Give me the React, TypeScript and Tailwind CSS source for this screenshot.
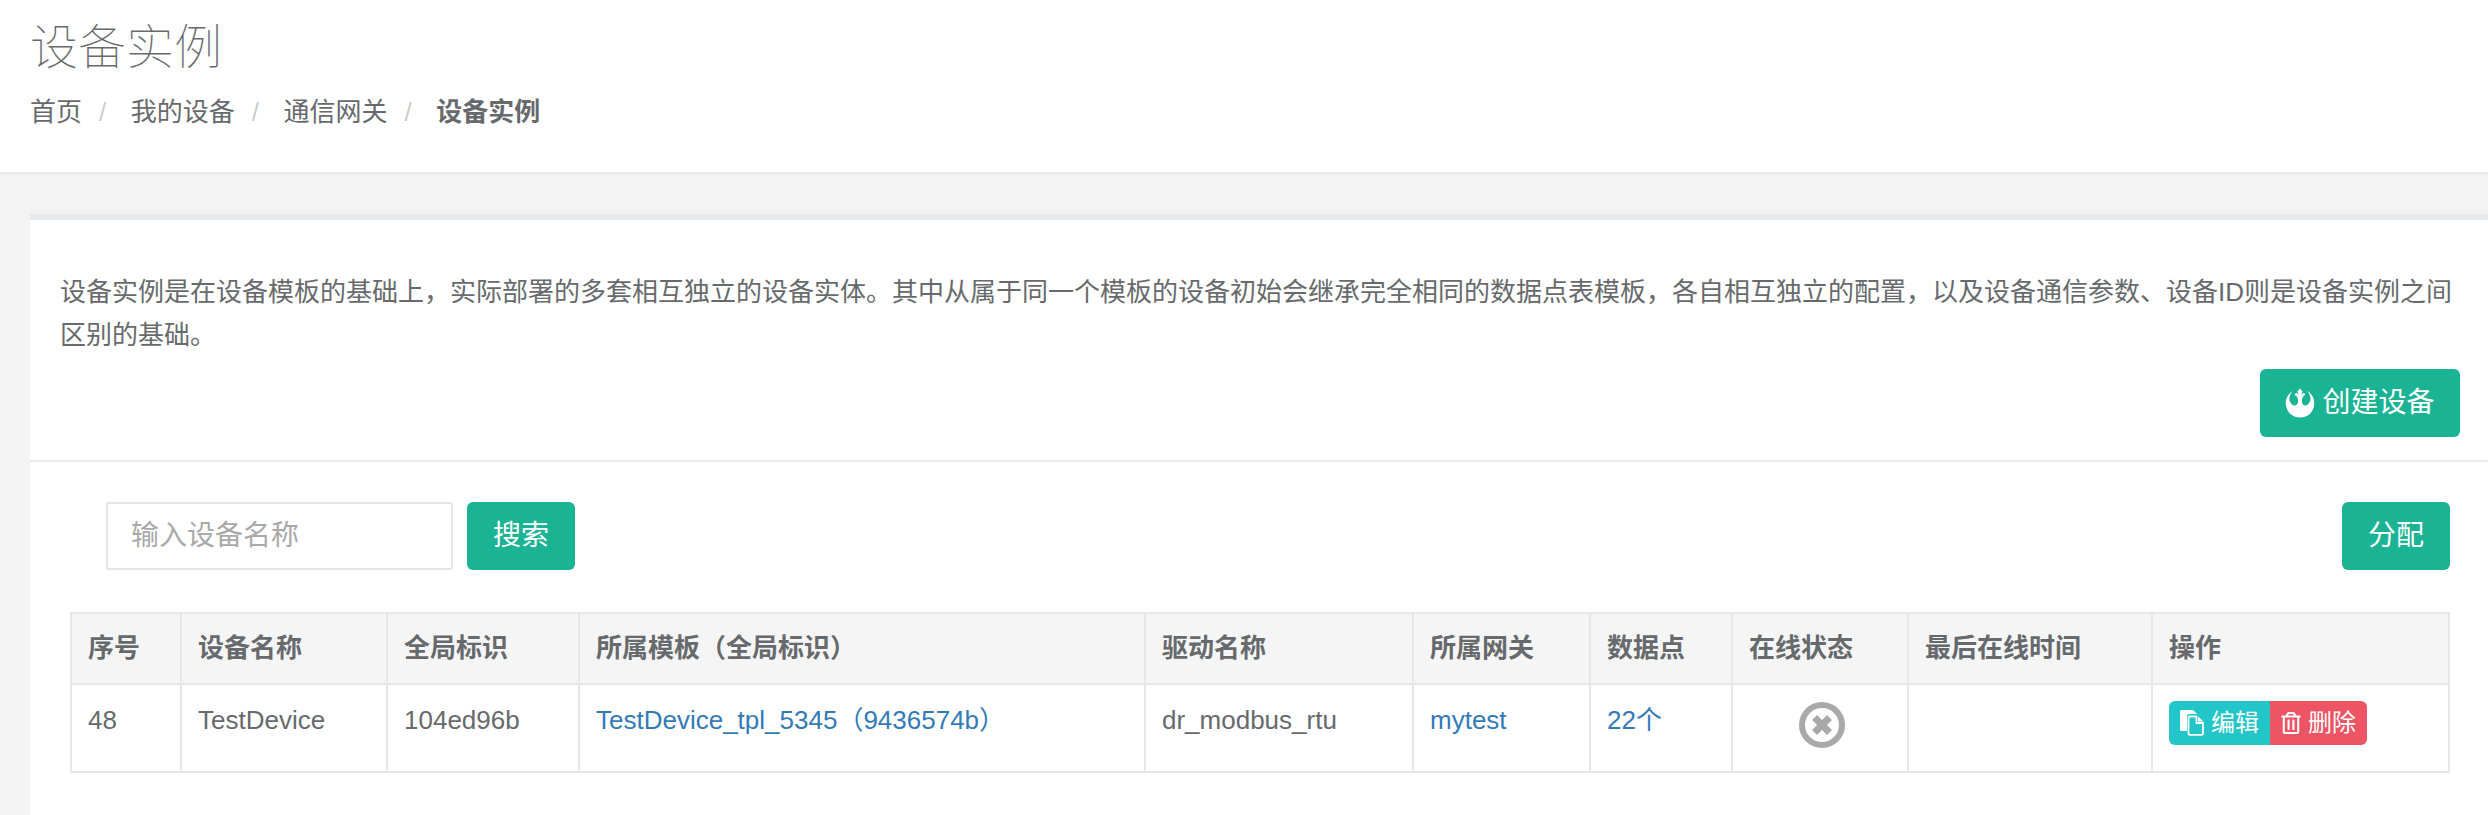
import React from 'react';
import { FaRebel, FaRegTrashAlt } from 'react-icons/fa';

const crumbs = ['首页', '我的设备', '通信网关'];

const columns = [
  { title: '序号', width: 'w-[110px]' },
  { title: '设备名称', width: 'w-[206px]' },
  { title: '全局标识', width: 'w-[192px]' },
  { title: '所属模板（全局标识）', width: 'w-[566px]' },
  { title: '驱动名称', width: 'w-[268px]' },
  { title: '所属网关', width: 'w-[177px]' },
  { title: '数据点', width: 'w-[142px]' },
  { title: '在线状态', width: 'w-[176px]' },
  { title: '最后在线时间', width: 'w-[244px]' },
  { title: '操作', width: 'w-[297px]' },
];

const cell = 'border-2 border-[#e7e7e7] p-[16px] align-top text-left leading-[37px]';
const bodyCell = `${cell} !pt-[17px]`;

const CopyIcon = () => (
  <svg viewBox="0 0 24 26" className="w-[24px] h-[26px]" aria-hidden="true">
    <path d="M0 1.5A1.5 1.5 0 0 1 1.5 0H13l4 4H9.500A2.500 2.500 0 0 0 7 6.500V21H1.500A1.500 1.500 0 0 1 0 19.500Z" fill="#fff" />
    <path d="M9.800 6.500H16.500V13H23V23.500A1.300 1.300 0 0 1 21.700 24.800H9.800A1.300 1.300 0 0 1 8.500 23.500V7.800A1.300 1.300 0 0 1 9.800 6.500Z" fill="none" stroke="#fff" strokeWidth="1.800" />
    <path d="M18 6.500 23.500 11.500H18Z" fill="#fff" />
  </svg>
);

const OfflineIcon = () => (
  <svg viewBox="0 0 46 46" className="w-[46px] h-[46px]" aria-hidden="true">
    <circle cx="23" cy="23" r="20" fill="none" stroke="#a9a9a9" strokeWidth="6" />
    <path d="M15.500 15.500 30.500 30.500M30.500 15.500 15.500 30.500" stroke="#a9a9a9" strokeWidth="7" fill="none" />
  </svg>
);

export default function App() {
  return (
    <div className="min-h-[815px] flex flex-col bg-[#f3f3f4] text-[26px] text-[#676a6c] font-['Liberation_Sans','Noto_Sans_CJK_SC',sans-serif]">
      {/* page heading */}
      <div className="h-[174px] bg-white border-b-2 border-[#e7eaec] px-[30px]">
        <h2 className="pt-[21px] text-[48px] leading-[53px] font-thin">设备实例</h2>
        <div className="mt-[20px] flex items-center leading-[37px]">
          {crumbs.map((c) => (
            <React.Fragment key={c}>
              <span>{c}</span>
              <span className="pl-[17px] pr-[24.500px] text-[#cccccc]">/</span>
            </React.Fragment>
          ))}
          <strong className="font-bold">设备实例</strong>
        </div>
      </div>

      {/* card */}
      <div className="flex-1 mt-[40px] ml-[30px] bg-white border-t-[6px] border-[#e7eaec]">
        <div className="pt-[51px] pb-[23px] border-b-2 border-[#e7eaec]">
          <p className="pl-[30px] pr-[36px] leading-[43px]">
            设备实例是在设备模板的基础上，实际部署的多套相互独立的设备实体。其中从属于同一个模板的设备初始会继承完全相同的数据点表模板，各自相互独立的配置，以及设备通信参数、设备ID则是设备实例之间区别的基础。
          </p>
          <div className="mt-[12px] pr-[28px] flex justify-end">
            <button className="h-[68px] w-[200px] flex items-center justify-center gap-[7px] rounded-[6px] bg-[#1ab394] text-white text-[28px]">
              <FaRebel className="w-[30px] h-[30px]" />
              创建设备
            </button>
          </div>
        </div>

        <div className="pl-[40px] pr-[38px] pt-[40px]">
          <div className="flex items-center justify-between">
            <div className="ml-[36px] flex items-center gap-[14px]">
              <input
                placeholder="输入设备名称"
                className="w-[347px] h-[68px] px-[23px] border-2 border-[#e5e6e7] rounded-[2px] text-[28px] placeholder:text-[#a9a9a9] outline-none"
              />
              <button className="h-[68px] w-[108px] rounded-[6px] bg-[#1ab394] text-white text-[28px]">搜索</button>
            </div>
            <button className="h-[68px] w-[108px] rounded-[6px] bg-[#1ab394] text-white text-[28px]">分配</button>
          </div>

          <table className="mt-[42px] w-[2378px] table-fixed border-collapse">
            <colgroup>
              {columns.map((c) => (
                <col key={c.title} className={c.width} />
              ))}
            </colgroup>
            <thead className="bg-[#f5f5f6]">
              <tr>
                {columns.map((c) => (
                  <th key={c.title} className={`${cell} font-bold whitespace-nowrap`}>
                    {c.title}
                  </th>
                ))}
              </tr>
            </thead>
            <tbody>
              <tr className="h-[88px]">
                <td className={bodyCell}>48</td>
                <td className={bodyCell}>TestDevice</td>
                <td className={bodyCell}>104ed96b</td>
                <td className={`${bodyCell} text-[#337ab7]`}>TestDevice_tpl_5345（9436574b）</td>
                <td className={bodyCell}>dr_modbus_rtu</td>
                <td className={`${bodyCell} text-[#337ab7]`}>mytest</td>
                <td className={`${bodyCell} text-[#337ab7]`}>22个</td>
                <td className={`${bodyCell} !pb-0`}>
                  <div className="flex justify-center pl-[3px]">
                    <OfflineIcon />
                  </div>
                </td>
                <td className={cell}></td>
                <td className={cell}>
                  <div className="flex text-[24px] text-white leading-[44px]">
                    <button className="h-[44px] w-[101px] flex items-center justify-center gap-[7px] rounded-l-[6px] bg-[#23c6c8]">
                      <CopyIcon />
                      编辑
                    </button>
                    <button className="h-[44px] w-[97px] flex items-center justify-center gap-[7px] rounded-r-[6px] bg-[#ed5565]">
                      <FaRegTrashAlt className="w-[20px] h-[22px]" />
                      删除
                    </button>
                  </div>
                </td>
              </tr>
            </tbody>
          </table>
        </div>
      </div>
    </div>
  );
}
